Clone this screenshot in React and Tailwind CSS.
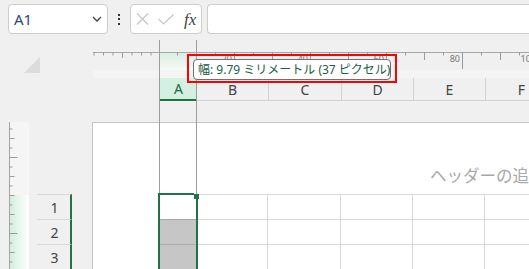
import React from 'react';

const cols = [
  { label: 'A', w: 'w-[37px]' },
  { label: 'B', w: 'w-[72px]' },
  { label: 'C', w: 'w-[73px]' },
  { label: 'D', w: 'w-[72px]' },
  { label: 'E', w: 'w-[72px]' },
  { label: 'F', w: 'w-[72px]' },
];

const HRuler = () => {
  // local x = page x - 93
  const left = [94, 103.5, 113, 122.5, 132, 141.5, 151];
  const right = [];
  for (let k = -15; k <= 4; k++) {
    const x = 462 + 19 * k;
    if (x >= 165 && x <= 530) right.push({ x, kind: ((k % 4) + 4) % 4 });
  }
  const labels = [
    ['20', 234],
    ['40', 310],
    ['60', 386],
    ['80', 462],
    ['100', 538],
  ];
  return (
    <svg width="436" height="26" className="block shrink-0">
      <defs>
        <linearGradient id="colA" x1="0" y1="0" x2="0" y2="1">
          <stop offset="0" stopColor="#d5eee0" />
          <stop offset="1" stopColor="#f7fbf9" />
        </linearGradient>
      </defs>
      <rect x="0" y="18" width="436" height="8" fill="#f4f4f4" />
      <rect x="67" y="0" width="36" height="18" fill="url(#colA)" />
      <line x1="0" y1="0.5" x2="436" y2="0.5" stroke="#a8a8a8" />
      {left.map((x, i) => (
        <line key={'l' + i} x1={x - 93} y1="0" x2={x - 93} y2={i === 3 ? 6 : 3.5} stroke="#9a9a9a" />
      ))}
      {right.map((t, i) => (
        <line
          key={'r' + i}
          x1={t.x - 93 + 0.5}
          y1="0"
          x2={t.x - 93 + 0.5}
          y2={t.kind === 0 ? 17 : t.kind === 2 ? 8 : 3.5}
          stroke="#9a9a9a"
        />
      ))}
      {labels.map(([t, x]) => (
        <text key={t} x={x - 95} y="10" textAnchor="end" fontSize="9" fill="#777" fontFamily="Noto Sans, sans-serif">
          {t}
        </text>
      ))}
    </svg>
  );
};

const VRuler = () => {
  const ticks = [];
  const lens = [8, 3, 5, 3, 5, 3, 5, 3];
  for (let k = -3; k <= 12; k++) {
    const y = 35.5 + 9.5 * k;
    if (y < 147) ticks.push({ y, len: lens[((k % 8) + 8) % 8] });
  }
  return (
    <svg width="30" height="147" className="block shrink-0">
      <defs>
        <linearGradient id="rowG" x1="0" y1="0" x2="1" y2="0">
          <stop offset="0" stopColor="#d4eedf" />
          <stop offset="1" stopColor="#ffffff" />
        </linearGradient>
      </defs>
      <rect x="10" y="0" width="19" height="73" fill="#f5f5f5" />
      <rect x="10" y="73" width="19" height="74" fill="url(#rowG)" />
      <line x1="9.5" y1="0" x2="9.5" y2="147" stroke="#a4a4a4" />
      {ticks.map((t, i) => (
        <line key={i} x1="9.5" y1={t.y} x2={9.5 + t.len} y2={t.y} stroke="#9a9a9a" />
      ))}
    </svg>
  );
};

const App = () => {
  return (
    <div className="relative w-[529px] h-[269px] overflow-hidden bg-[#f0f0f0] font-['Noto_Sans','Noto_Sans_CJK_JP',sans-serif] select-none">
      {/* formula bar */}
      <div className="h-[34px] flex pt-[4px] pl-[8px]">
        <div className="w-[100px] shrink-0 h-[30px] bg-white border border-[#cdcdcd] rounded-[4px] flex items-center justify-between pl-[5px] pr-[5px]">
          <span className="text-[15px] leading-none text-[#2b4c73]">A1</span>
          <svg width="10" height="6" viewBox="0 0 10 6">
            <path d="M1 1 L5 5 L9 1" fill="none" stroke="#444" strokeWidth="1.3" />
          </svg>
        </div>
        <div className="w-[22px] shrink-0 h-[30px] flex flex-col items-center justify-center gap-[2.5px]">
          <span className="w-[2px] h-[2px] bg-[#333]" />
          <span className="w-[2px] h-[2px] bg-[#333]" />
          <span className="w-[2px] h-[2px] bg-[#333]" />
        </div>
        <div className="w-[72px] shrink-0 h-[30px] bg-white border border-[#cdcdcd] rounded-[4px] flex items-center pl-[5px]">
          <svg width="13" height="12" viewBox="0 0 13 12">
            <path d="M1 0.5 L12 11.5 M12 0.5 L1 11.5" stroke="#c4c4c4" strokeWidth="1.1" />
          </svg>
          <svg width="16" height="11" viewBox="0 0 16 11" className="ml-[9px]">
            <path d="M0.5 5 L5.5 10 L15.5 0.5" fill="none" stroke="#c4c4c4" strokeWidth="1.1" />
          </svg>
          <span className="ml-[10px] text-[17px] italic leading-none text-[#444] font-['Liberation_Serif',serif]">fx</span>
        </div>
        <div className="ml-[5px] flex-1 h-[30px] bg-white border border-r-0 border-[#cdcdcd] rounded-l-[4px]" />
      </div>

      <div className="h-[18px]" />

      {/* horizontal ruler */}
      <div className="h-[26px] flex">
        <div className="w-[93px] shrink-0 pl-[24px] pt-[5px]">
          <svg width="17" height="17" viewBox="0 0 17 17" className="block">
            <polygon points="16,0 16,16 0,16" fill="#dcdcdc" />
          </svg>
        </div>
        <HRuler />
      </div>

      {/* column headers */}
      <div className="h-[23px] flex">
        <div className="w-[160px] shrink-0" />
        {cols.map((c, i) => (
          <div
            key={c.label}
            className={`${c.w} shrink-0 h-[23px] flex items-center justify-center text-[14px] ${
              i === 0
                ? 'bg-[#d3f0e0] text-[#1e6b45] border-b-2 border-[#217346]'
                : 'text-[#444] border-b border-r border-[#d2d2d2]'
            }`}
          >
            {c.label}
          </div>
        ))}
      </div>

      <div className="h-[21px]" />

      {/* body */}
      <div className="flex h-[147px]">
        <div className="w-[92px] shrink-0 flex">
          <VRuler />
          <div className="ml-[7px] w-[35px] shrink-0 pt-[72px]">
            {['1', '2', '3'].map((n) => (
              <div
                key={n}
                className="h-[25px] border-t border-[#d8d8d8] border-r-2 border-r-[#217346] flex items-center justify-center pl-[2px] text-[14px] text-[#444]"
              >
                {n}
              </div>
            ))}
          </div>
        </div>
        <div className="flex-1 min-w-0 overflow-hidden bg-white border-t border-l border-[#c6c6c6]">
          <div className="h-[71px] pl-[337px] pt-[40px] whitespace-nowrap">
            <span className="text-[16.5px] leading-[24px] text-[#a8a8a8] font-['Noto_Sans_CJK_JP',sans-serif]">ヘッダーの追加</span>
          </div>
          {[0, 1, 2].map((r) => (
            <div key={r} className="flex h-[25px]">
              <div className="w-[66px] shrink-0" />
              {cols.map((c, i) => (
                <div
                  key={c.label}
                  className={`${c.w} shrink-0 h-[25px] border-t ${
                    i === 0
                      ? r === 0
                        ? 'border-[#d9d9d9]'
                        : 'bg-[#c6c6c6] border-[#a9a9a9]'
                      : 'border-r border-[#d9d9d9]'
                  }`}
                />
              ))}
            </div>
          ))}
        </div>
      </div>

      {/* column boundary guides */}
      <div className="absolute left-[159px] top-[40px] w-px h-[229px] bg-[#9e9e9e]" />
      <div className="absolute left-[196px] top-[40px] w-px h-[229px] bg-[#9e9e9e]" />

      {/* selection */}
      <div className="absolute left-[158px] top-[193px] w-[2px] h-[76px] bg-[#217346]" />
      <div className="absolute left-[158px] top-[193px] w-[36px] h-[2px] bg-[#217346]" />
      <div className="absolute left-[194px] top-[194px] w-[5px] h-[5px] bg-[#217346]" />
      <div className="absolute left-[196px] top-[199px] w-[2px] h-[70px] bg-[#217346]" />

      {/* width tooltip */}
      <div className="absolute left-[187px] top-[54px] w-[210px] h-[29px] border-2 border-[#ff0000]" />
      <div className="absolute left-[193px] top-[59px] w-[198px] h-[21px] bg-white border border-[#707070] rounded-[4px] flex items-center pl-[4px] whitespace-nowrap">
        <span className="text-[12px] leading-none text-[#245c46]">幅: 9.79 ミリメートル (37 ピクセル)</span>
      </div>
    </div>
  );
};

export default App;
